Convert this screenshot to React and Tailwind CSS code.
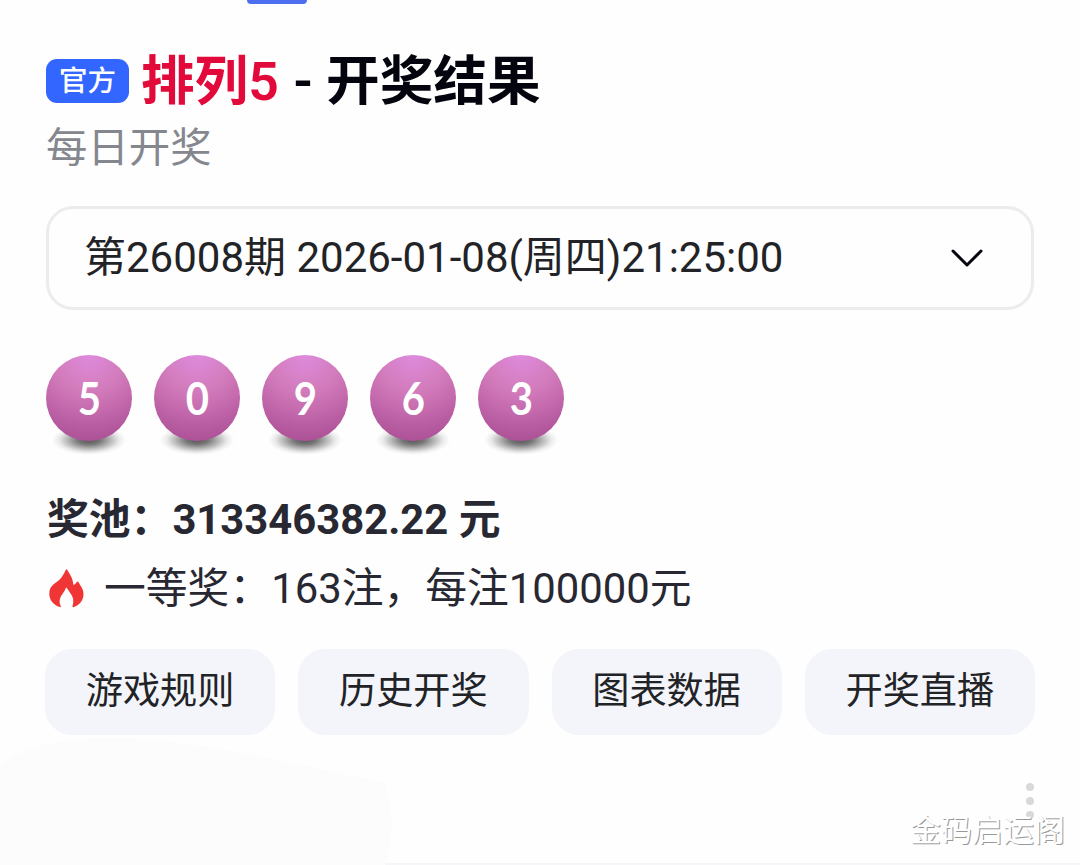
import React from 'react';

const balls = [5, 0, 9, 6, 3];
const links = ["游戏规则", "历史开奖", "图表数据", "开奖直播"];

const FlameIcon = () => (
  <svg className="w-[35px] h-[39px] shrink-0" viewBox="0 0 35 39">
    <path
      fill="#f03535"
      d="M17.2 0.3C17.6 0 18 .2 18.3.8C20 4.5 23.6 8 24.1 14.2C24.2 15.8 25.2 16.1 26 15.2C27 14.2 27.3 13.4 28.2 12.8C28.8 12.4 29.2 12.7 29.5 13.2C31.5 16.8 34.5 20 34.5 25C34.5 31.8 30 36.3 24.6 38.2C23.6 38.5 23.3 38 23.5 37.1C24.4 34 24.6 31.5 23.7 28.5C22.8 25.2 20 22.5 17.8 18.9C17.4 18.3 17 18.4 16.8 19.1C15.8 23.4 11 26.6 10.6 32C10.5 34 11.1 35.7 11.8 37.2C12.1 38 11.7 38.4 10.9 38.1C4.4 35.9.3 31.2.3 25C.3 14.8 8 14.5 12.5 8.5C14.5 5.8 16 2.5 17.2.3Z"
    />
  </svg>
);

const Ball = ({ value }) => (
  <div className="relative w-[86px] h-[86px]">
    <div className="absolute left-[6px] top-[70px] w-[74px] h-[30px] bg-[radial-gradient(closest-side,#555_0%,#777_30%,#bbb_60%,#ebebeb_82%,#fefefe_100%)]" />
    <div className="relative w-full h-full rounded-full flex items-center justify-center bg-[radial-gradient(circle_at_50%_0%,#df8bdd_0%,#d27bbb_38%,#bc60a5_70%,#a64a91_100%)] text-white text-[46px] font-bold font-['Lato',sans-serif] leading-none">
      <span className="scale-x-[0.87]">{value}</span>
    </div>
  </div>
);

const App = () => {
  return (
    <div className="relative w-[1080px] h-[865px] overflow-hidden bg-[#fefefe] font-['Roboto','Noto_Sans_CJK_SC',sans-serif] text-[#222326]">
      <div className="w-[60px] h-1 ml-[247px] rounded-b bg-[#4e6ef2]" />

      <div className="px-[46px]">
        <div className="flex items-center h-[72px] mt-[41px] whitespace-nowrap">
          <span className="flex items-center justify-center w-[83px] h-[44px] pt-[2px] rounded-[11px] bg-[#3366ff] text-white text-[28.5px] font-medium">
            官方
          </span>
          <h1 className="ml-[12px] pt-[2px] text-[53.6px] font-semibold leading-[72px] text-[#03040d]">
            <span className="text-[#e20a3a]">排列5</span>
            <span className="ml-px"> - 开奖结果</span>
          </h1>
        </div>
        <p className="h-[60px] pt-px text-[41.4px] leading-[60px] text-[#85878e]">每日开奖</p>

        <button className="flex items-center justify-between w-[988px] h-[104px] mt-[29px] pl-[35px] pr-[46px] rounded-[27px] border-3 border-[#ececec] whitespace-nowrap">
          <span className="pb-[2px] text-[42px]">第26008期 2026-01-08(周四)21:25:00</span>
          <svg className="w-[36px] h-[22px]" viewBox="0 0 36 22" fill="none">
            <path d="M4 4L18 18L32 4" stroke="#05060f" strokeWidth="3" strokeLinecap="round" strokeLinejoin="round" />
          </svg>
        </button>

        <div className="flex gap-[22px] mt-[45px]">
          {balls.map((value) => (
            <Ball key={value} value={value} />
          ))}
        </div>

        <p className="h-[60px] mt-[48px] pl-px pt-px text-[41.8px] leading-[60px] font-bold text-[#272832] whitespace-nowrap">
          奖池：313346382.22 元
        </p>
        <div className="flex items-center h-[60px] mt-[9px] pl-[3px] whitespace-nowrap text-[#272832]">
          <FlameIcon />
          <span className="ml-[20px] pt-[2px] text-[41.8px] leading-[60px]">一等奖：163注，每注100000元</span>
        </div>

        <div className="flex gap-[23px] w-[990px] -ml-px mt-[31px]">
          {links.map((label) => (
            <button key={label} className="flex-1 h-[86px] rounded-[27px] bg-[#f4f5fa] text-[37.2px]">
              {label}
            </button>
          ))}
        </div>
      </div>

      <svg className="absolute left-0 top-[735px] w-[400px] h-[130px]" viewBox="0 0 400 130">
        <path d="M0 30C30 8 70 2 120 3C200 5 300 30 385 48C392 70 395 100 385 130H0Z" fill="#fcfcfc" />
      </svg>
      <div className="absolute left-[385px] right-0 bottom-0 h-[2px] bg-[#f6f6f8]" />

      <div className="absolute left-[1026px] top-[783px] flex flex-col gap-[6px]">
        <i className="w-2 h-2 rounded-full bg-[#d9d9d9]" />
        <i className="w-2 h-2 rounded-full bg-[#d9d9d9]" />
        <i className="w-2 h-2 rounded-full bg-[#d9d9d9]" />
      </div>
      <div className="absolute left-[910px] top-[808px] text-[31px] leading-[46px] text-white whitespace-nowrap [text-shadow:1px_1px_0_#999]">
        金码启运阁
      </div>
    </div>
  );
};

export default App;
